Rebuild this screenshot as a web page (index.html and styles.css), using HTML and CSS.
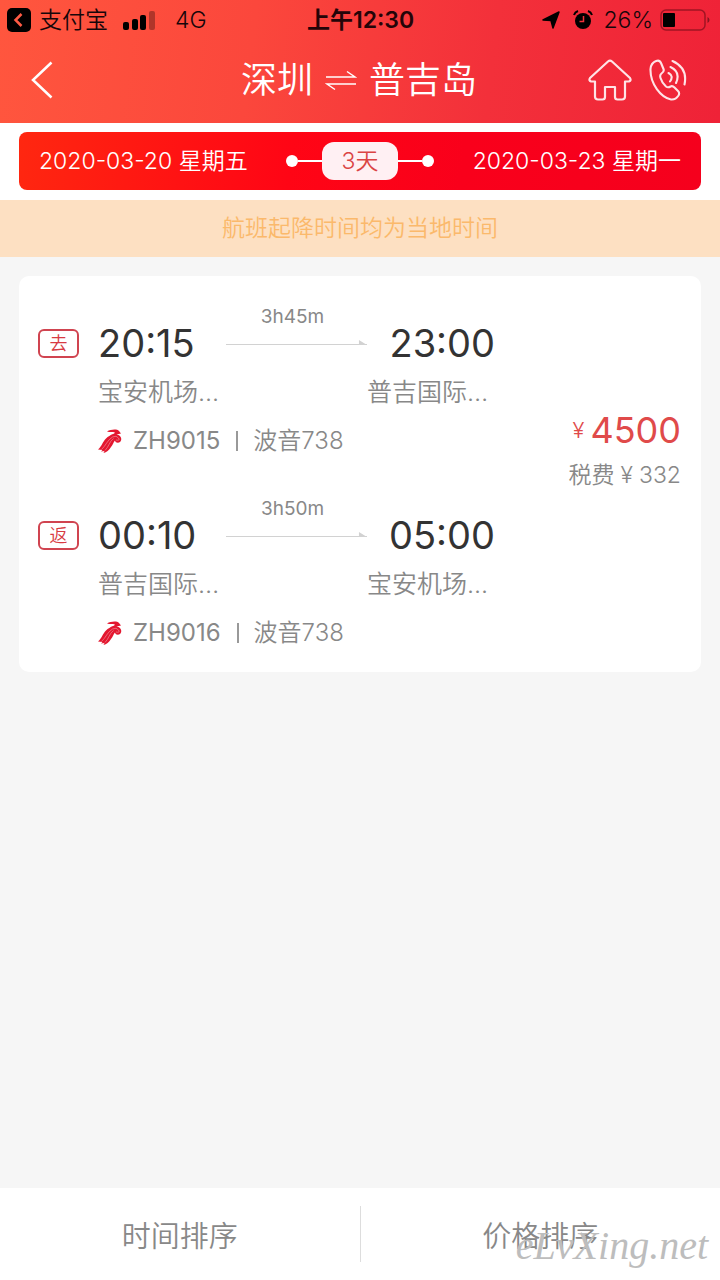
FILE: index.html
```html
<!DOCTYPE html>
<html lang="zh-CN">
<head>
<meta charset="utf-8">
<meta name="viewport" content="width=device-width, initial-scale=1">
<title>深圳 - 普吉岛</title>
<link rel="stylesheet" href="styles.css">
</head>
<body>
<svg class="defs" aria-hidden="true">
  <symbol id="airline" viewBox="0 0 24 24">
    <path d="M9 2.500C13 .2 19 -.2 21 2L23 4.500L18.500 5.500C22.500 6 24.500 9.500 22.500 12.500C20.500 14.500 17.500 14 17 11.500C15.500 13 15 15.500 13 18C11 21 8.500 23.500 5.500 24L6.500 22L3 22.500L4.500 21L0 20.500C4 17 4.500 13 8 9.500C10 7.500 12.500 6 15 5C17 4.200 17.500 3.500 16 3.200C14 2.800 12 3.500 9 2.500Z" fill="#e3172f"/>
    <path d="M3.500 20.500C8 16.500 9 11.500 14.500 8M7 21.500C11 17.500 11 13 15.500 9.500M14.500 8Q18.500 6 20.500 9T18 11" fill="none" stroke="#f08a96" stroke-width=".7"/>
  </symbol>
</svg>
<div class="page">
  <header class="header">
    <div class="status">
      <div class="status-side">
        <svg class="return-app" viewBox="0 0 24 24" aria-hidden="true"><rect width="24" height="24" rx="5"/><path d="M14.500 6L8.500 12L14.500 18" fill="none" stroke="#ff5a44" stroke-width="2.500"/></svg>
        <span>支付宝</span>
        <svg class="signal" viewBox="0 0 32 20" aria-hidden="true"><rect y="12" width="6" height="8" rx="2"/><rect x="9" y="9" width="6" height="11" rx="2"/><rect x="17" y="5" width="6" height="15" rx="2"/><rect x="26" y="1" width="6" height="19" rx="2" opacity=".3"/></svg>
        <span>4G</span>
      </div>
      <div class="clock">上午12:30</div>
      <div class="status-side status-right">
        <svg class="locate" viewBox="0 0 18 18" aria-hidden="true"><path d="M17 1L11 17L9 9.500L1 9Z" stroke="#000" stroke-width="1.500" stroke-linejoin="round"/></svg>
        <svg class="alarm" viewBox="0 0 20 20" aria-hidden="true"><circle cx="10" cy="11" r="8"/><path d="M1 5Q2 2 5 1M15 1Q18 2 19 5" fill="none" stroke="#000" stroke-width="2"/><path d="M10.500 6V11.500H6.500" fill="none" stroke="#f3303a" stroke-width="1.500"/></svg>
        <span>26%</span>
        <svg class="battery" viewBox="0 0 50 22" aria-hidden="true"><rect x="1" y="1" width="44" height="20" rx="5" fill="none" stroke="#a01423" stroke-width="1.500"/><rect x="3" y="4" width="12" height="14" rx="1"/><path d="M47.500 8Q49.500 9 49.500 11T47.500 14Z" fill="#8a1420"/></svg>
      </div>
    </div>
    <nav class="nav">
      <button class="icon-button" aria-label="返回"><svg class="back" viewBox="0 0 22 38"><path d="M20.500 1.500L2 19L20.500 36.500" fill="none" stroke="#fff" stroke-width="2.500"/></svg></button>
      <h1 class="title"><span>深圳</span><svg class="swap" viewBox="0 0 32 22" aria-hidden="true"><path d="M1 8H30L22 2.500M31 15H2L10 20.500" fill="none" stroke="#fff" stroke-width="1.500"/></svg><span>普吉岛</span></h1>
      <div class="nav-actions">
        <button class="icon-button" aria-label="首页"><svg class="home" viewBox="0 0 44 42"><path d="M20 2.500Q22 .8 24 2.500L42 19Q43.500 21.500 41 22.500H37V37.500Q37 40.500 34 40.500H29.500Q27 40.500 27 38V28H17V38Q17 40.500 14.500 40.500H10Q7 40.500 7 37.500V22.500H3Q.5 21.500 2 19Z" fill="none" stroke="#ffe3e6" stroke-width="2.200" stroke-linejoin="round"/></svg></button>
        <button class="icon-button" aria-label="电话"><svg class="phone" viewBox="0 0 38 42"><g fill="none" stroke="#ffe3e6" stroke-width="2.100" stroke-linecap="round" stroke-linejoin="round"><path d="M7 2Q10.500 .5 12 4L14.500 10Q15.500 12.500 12.500 14.500Q10.500 16 11.500 19Q13 24 17 27.500Q19 29 21.500 27.500Q23.500 26.500 25.500 28.500L29 32Q31 34 29.500 36.500Q26.500 41 22 40.500C12 38.500 1 25 1.500 10Q2 4 7 2Z"/><path d="M19.500 14Q25 17 21 22.500M21.500 8Q32 13 27 24M23.500 2Q39 9 35.500 25.500"/></g></svg></button>
      </div>
    </nav>
  </header>

  <section class="date-strip">
    <div class="dates">
      <span>2020-03-20 星期五</span>
      <div class="stay"><i class="dot"></i><i class="link"></i><b class="days">3天</b><i class="link"></i><i class="dot"></i></div>
      <span class="date-end">2020-03-23 星期一</span>
    </div>
  </section>
  <p class="notice">航班起降时间均为当地时间</p>

  <main class="results">
    <article class="card">
      <div class="legs">
        <section class="leg">
          <span class="tag">去</span>
          <time class="time">20:15</time>
          <div class="route"><span>3h45m</span><svg class="arrow" viewBox="0 0 140 6" preserveAspectRatio="xMaxYMax slice" aria-hidden="true"><path d="M0 5H140V6H0Z M132 1L140 6H132Z"/></svg></div>
          <time class="time arrive">23:00</time>
          <span class="airport from">宝安机场...</span>
          <span class="airport to">普吉国际…</span>
          <div class="flight"><svg class="airline" aria-hidden="true"><use href="#airline"/></svg><span class="number">ZH9015</span><i class="bar"></i><span>波音738</span></div>
        </section>
        <section class="leg">
          <span class="tag">返</span>
          <time class="time">00:10</time>
          <div class="route"><span>3h50m</span><svg class="arrow" viewBox="0 0 140 6" preserveAspectRatio="xMaxYMax slice" aria-hidden="true"><path d="M0 5H140V6H0Z M132 1L140 6H132Z"/></svg></div>
          <time class="time arrive">05:00</time>
          <span class="airport from">普吉国际…</span>
          <span class="airport to">宝安机场...</span>
          <div class="flight"><svg class="airline" aria-hidden="true"><use href="#airline"/></svg><span class="number">ZH9016</span><i class="bar"></i><span>波音738</span></div>
        </section>
      </div>
      <div class="fare">
        <div class="price"><small class="yen">¥</small><span>4500</span></div>
        <div class="tax"><span>税费</span><span class="tax-yen">¥</span><span>332</span></div>
      </div>
    </article>
  </main>

  <footer class="sort">
    <button class="sort-button">时间排序</button>
    <button class="sort-button">价格排序</button>
    <span class="watermark">eLvXing.net</span>
  </footer>
</div>
</body>
</html>
```

FILE: styles.css
```css
* { box-sizing: border-box; }
body {
  margin: 0;
  background: #f6f6f6;
  font-family: Inter, "Noto Sans CJK SC", sans-serif;
  font-size: 23px;
  font-weight: 350;
  color: #888;
}
button { border: 0; padding: 0; background: none; font: inherit; color: inherit; }
svg { display: block; flex: none; }
.defs { position: absolute; width: 0; height: 0; }
.page { display: flex; flex-direction: column; min-height: 100vh; }

.header { background: linear-gradient(97deg, #ff563e 0%, #fb473c 35%, #f3303a 68%, #ef2237 100%); }
.status { display: flex; align-items: center; height: 40px; padding: 0 10px 0 7px; color: #16060a; line-height: 24px; }
.status-side { flex: 1; display: flex; align-items: center; }
.status-right { justify-content: flex-end; }
.clock { padding-left: 4px; font-weight: 600; color: #240408; }
.return-app { width: 24px; height: 24px; margin-right: 8px; }
.signal { width: 32px; height: 20px; margin: 0 20px 0 15px; }
.locate { width: 18px; height: 18px; margin-right: 13px; }
.alarm { width: 20px; height: 20px; margin-right: 11px; }
.battery { width: 50px; height: 22px; margin-left: 7px; }

.nav { display: grid; grid-template-columns: 1fr auto 1fr; align-items: center; height: 83px; padding: 0 33px 3px 31px; color: #fff; }
.icon-button { justify-self: start; }
.back { width: 22px; height: 38px; }
.title { display: flex; align-items: center; gap: 12px; margin: 0; font-size: 36px; font-weight: 350; line-height: 52px; }
.swap { width: 32px; height: 22px; }
.nav-actions { display: flex; justify-content: flex-end; gap: 17px; }
.home { width: 44px; height: 42px; }
.phone { width: 38px; height: 42px; }

.date-strip { padding: 9px 19px 10px; background: #fff; }
.dates {
  display: grid; grid-template-columns: 1fr auto 1fr; align-items: center;
  height: 58px; padding: 0 20px; border-radius: 8px; color: #fff; line-height: 28px;
  background: linear-gradient(97deg, #ff2710 0%, #ff0515 40%, #f9001b 65%, #f5001d 100%);
}
.date-end { text-align: right; }
.stay { display: flex; align-items: center; }
.dot { width: 12px; height: 12px; border-radius: 50%; background: #fff; }
.link { width: 24px; height: 2px; background: #fff; }
.days { width: 76px; border-radius: 12px; background: #fff0f3; color: #db4444; font-weight: 350; line-height: 38px; text-align: center; }
.notice { margin: 0; background: #fde0c2; color: #fbb96b; line-height: 57px; text-align: center; }

.results { flex: 1; padding: 19px; }
.card { display: flex; align-items: flex-start; padding: 29px 20px 24px 19px; border-radius: 10px; background: #fff; }
.legs { flex: 1; display: grid; gap: 41px; }
.leg { display: grid; grid-template-columns: 60px 128px 1fr 128px; grid-template-rows: 62px 42px 47px; align-items: end; }
.tag { width: 41px; margin-bottom: 9px; border: 2px solid #d04450; border-radius: 6px; color: #d83a42; font-size: 18px; line-height: 25px; text-align: center; }
.time { color: #333; font-size: 38px; font-weight: 400; line-height: 48px; }
.arrive { text-align: right; }
.route { align-self: start; font-size: 19px; font-weight: 400; line-height: 24px; text-align: center; }
.route span { display: block; margin-right: 8px; }
.arrow { width: 100%; height: 6px; margin-top: 10px; fill: #d2d2d2; }
.airport { font-size: 25px; line-height: 34px; white-space: nowrap; }
.from { grid-column: 2; }
.to { grid-column: 4; }
.flight { grid-column: 2 / -1; display: flex; align-items: center; font-size: 24px; line-height: 30px; }
.number { font-weight: 400; }
.airline { width: 24px; height: 24px; margin-right: 11px; }
.bar { width: 2px; height: 20px; margin: 0 15px 0 16px; background: #999; }
.fare { width: 186px; padding-top: 102px; }
.price, .tax { display: flex; align-items: center; justify-content: flex-end; }
.price { color: #e04a4a; font-size: 36px; font-weight: 400; line-height: 46px; }
.yen { margin-right: 6px; font-size: 22px; font-weight: 350; }
.tax { line-height: 44px; }
.tax-yen { margin: 0 6px; }

.sort { position: relative; display: flex; height: 92px; background: #fff; align-items: center; }
.sort-button { flex: 1; height: 56px; font-size: 29px; }
.sort-button + .sort-button { border-left: 1px solid #ddd; }
.watermark { position: absolute; right: 12px; bottom: 10px; color: #bdbdbd; font: italic 40px/48px "Liberation Serif", serif; }
```
